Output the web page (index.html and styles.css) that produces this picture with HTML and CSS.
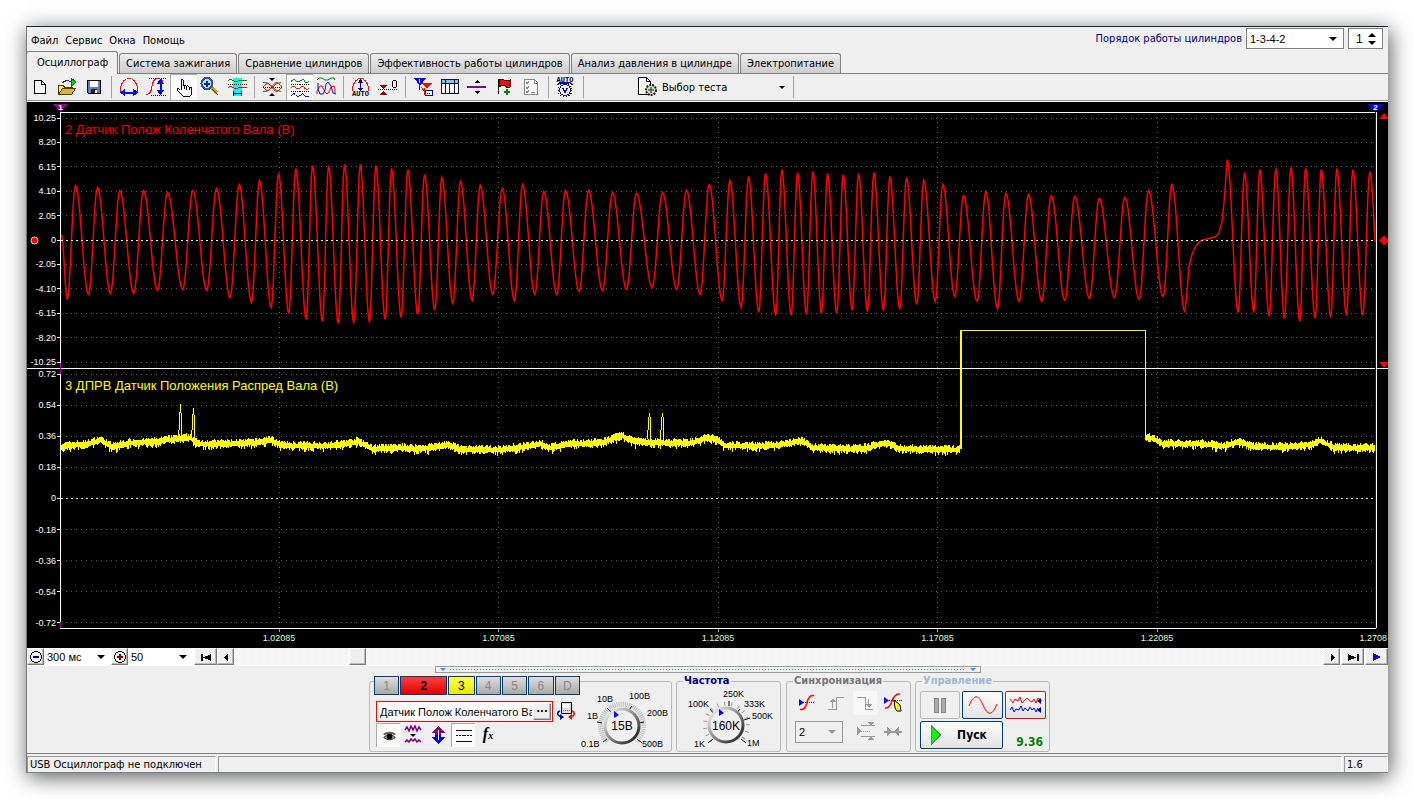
FILE: index.html
```html
<!DOCTYPE html>
<html lang="ru">
<head>
<meta charset="utf-8">
<title>USB Осциллограф</title>
<link rel="stylesheet" href="styles.css">
</head>
<body>
<div class="window">
  <header class="top">
    <nav class="menu">
      <button>Файл</button><button>Сервис</button><button>Окна</button><button>Помощь</button>
    </nav>
    <div class="order">
      <label for="order">Порядок работы цилиндров</label>
      <span class="drop order-drop"><select id="order"><option>1-3-4-2</option></select></span>
      <span class="spin"><input id="cyl" type="text" value="1" aria-label="Цилиндр"><span class="spin-arrows"><i class="up"></i><i class="down"></i></span></span>
    </div>
  </header>

  <div class="tabs" role="tablist">
    <button class="tab active" role="tab" aria-selected="true">Осциллограф</button>
    <button class="tab" role="tab">Система зажигания</button>
    <button class="tab" role="tab">Сравнение цилиндров</button>
    <button class="tab" role="tab">Эффективность работы цилиндров</button>
    <button class="tab" role="tab">Анализ давления в цилиндре</button>
    <button class="tab" role="tab">Электропитание</button>
  </div>

  <div class="toolbar">
    <button class="tool" aria-label="Новый"><svg viewBox="0 0 27 26"><path d="M7.500 6.500h7l4 4v9h-11z" fill="#fff" stroke="#000"/><path d="M14.500 6.500v4h4" fill="none" stroke="#000"/></svg></button>
    <button class="tool" aria-label="Открыть"><svg viewBox="0 0 27 26"><path d="M4.500 20.500v-9h5l1 2h8v3" fill="#ffe680" stroke="#4d3b00"/><path d="M4.500 20.500l4-6h13l-4 6z" fill="#d8b23c" stroke="#4d3b00"/><path d="M8 9q4-4 9-1" fill="none" stroke="#333"/><path d="M17 4l5 4-5 5z" fill="#00d020" stroke="#063"/></svg></button>
    <button class="tool" aria-label="Сохранить"><svg viewBox="0 0 27 26"><path d="M6.500 6.500h13v13h-12l-1-1z" fill="#6478c8" stroke="#000"/><path d="M9 7h8v6H9z" fill="#fff"/><path d="M10 15h6v4h-6z" fill="#222"/><path d="M14 16h2v3h-2z" fill="#fff"/></svg></button>
    <i class="sep"></i>
    <button class="tool" aria-label="Развертка"><svg viewBox="0 0 27 26"><path d="M4.500 18v-4q0-3 3-7q2-2.500 5.500-2.500t5.500 2.500q3 4 3 7v4" fill="none" stroke="red"/><path d="M6 18.500h14" stroke="#00f" stroke-width="2"/><path d="M4 18.500l5-4v8zM22 18.500l-5-4v8z" fill="#00f"/></svg></button>
    <button class="tool" aria-label="Амплитуда"><svg viewBox="0 0 27 26"><path d="M3 20.500q5 0 6-8t6-8q3 0 5 3" fill="none" stroke="red"/><path d="M6 4.500h17M8 21.500h15" stroke="#000" stroke-dasharray="1 1"/><path d="M17.500 7v12" stroke="#00f" stroke-width="2"/><path d="M17.500 5l-4 5h8zM17.500 21l-4-5h8z" fill="#00f"/></svg></button>
    <button class="tool pressed" aria-label="Рука"><svg viewBox="0 0 27 26"><path d="M10.500 15V6q0-1.500 1-1.500T13 6v5q2-2 3 .500q2-1.500 3 1q2-.5 2.500 1.500v5l-1.500 3h-8l-5-6q-1.500-2 0-2t3 2z" fill="#fff" stroke="#000"/><path d="M13.500 11v4M16.500 12v4M19.500 13v3" stroke="#000"/></svg></button>
    <button class="tool" aria-label="Лупа"><svg viewBox="0 0 27 26"><path d="M14 13l6 6" stroke="#d09a18" stroke-width="4"/><path d="M15 15l6 6" stroke="#503800"/><circle cx="10" cy="9.500" r="5.500" fill="#b4dcff" stroke="#38547e" stroke-width="2"/><path d="M7 9.500h6M10 6.500v6" stroke="#003080" stroke-width="2"/></svg></button>
    <button class="tool" aria-label="Участок"><svg viewBox="0 0 27 26"><path d="M9 4h9v18H9z" fill="#0ff"/><path d="M4 7q2-3 4-1t6 1t5-1t4 1" fill="none" stroke="green"/><path d="M4 10.500h19" stroke="#000" stroke-dasharray="1 1"/><path d="M4 14q2-3 4-1t6 1t5-1t4 1" fill="none" stroke="red"/><path d="M9.500 17v5M17.500 17v5M10 19.500h7" stroke="#00a" stroke-width="1.500"/></svg></button>
    <i class="sep"></i>
    <button class="tool" aria-label="Совместить"><svg class="smooth" viewBox="0 0 27 26"><path d="M4 8.500q5-1 9 4t9 5" fill="none" stroke="green"/><path d="M4 17.500q5 1 9-4t9-5" fill="none" stroke="green"/><path d="M4 13l3 3q2 2 5-2l4-5q2-2 5 2l2 2M4 13l3-3q2-2 5 2l4 5q2 2 5-2l2-2" fill="none" stroke="red"/><path d="M4 13.500h19" stroke="#000" stroke-dasharray="1 1"/><path d="M10 4h6l-3 3zM10 22h6l-3-3z"/></svg></button>
    <button class="tool pressed" aria-label="Разделить"><svg viewBox="0 0 27 26"><path d="M4 7q3-4 5-1t5 0t4 0t5 1" fill="none" stroke="green"/><path d="M4 9.500h19M4 17.500h19" stroke="#000" stroke-dasharray="1 1"/><path d="M4 14q3-4 5-1t5 0t4 0t5 1" fill="none" stroke="red"/><path d="M4 22q3-4 5-1t5 0t4 0t5 1" fill="none" stroke="#00f"/></svg></button>
    <button class="tool" aria-label="Наложить"><svg class="smooth" viewBox="0 0 27 26"><path d="M4 6l2-2h3l3 2h3l3-2h3l1 2" fill="none" stroke="green"/><path d="M4 20v-3l3-5h2l3 6 2 2 2-2 2-5 3-1 1 3v5" fill="none" stroke="red"/><path d="M5 9v6l2 5h3l2-4 1-6 2-2 3 4 2 7 3 1" fill="none" stroke="#00f"/></svg></button>
    <i class="sep"></i>
    <button class="tool" aria-label="Авто"><svg viewBox="0 0 27 26"><path d="M4.500 17v-3q0-3 3-7q2-2.500 5-2.500t5 2.500q3 4 3 7v3" fill="none" stroke="red"/><path d="M12.500 7v9" stroke="#009" stroke-width="1.500"/><path d="M12.500 5l-3 4h6zM12.500 17l-3-3h6z" fill="#009"/><text class="auto" x="12.500" y="22">AUTO</text></svg></button>
    <button class="tool" aria-label="Ноль"><svg viewBox="0 0 27 26"><path d="M3 15.500h20" stroke="#000" stroke-dasharray="1 1"/><path d="M4 11h8l-4 4zM4 21h8l-4-4z" fill="#900"/><rect x="17.500" y="6.500" width="4" height="7" rx="2" fill="none" stroke="#000"/></svg></button>
    <i class="sep"></i>
    <button class="tool" aria-label="Маркеры"><svg viewBox="0 0 27 26"><path d="M4 4h12l-6 8z" fill="#00f"/><path d="M9.500 10v6" stroke="#00f"/><path d="M9.500 5v4" stroke="#fff"/><path d="M12 9h10l-5 6z" fill="red"/><path d="M14.500 14v7M11 13l4 5" stroke="red"/><rect x="15.500" y="16.500" width="7" height="5" fill="#fff" stroke="#009"/><path d="M17 19.500h4" stroke="#009" stroke-dasharray="1 1"/></svg></button>
    <button class="tool" aria-label="Таблица"><svg viewBox="0 0 27 26"><path d="M4.500 5.500h17v14h-17z" fill="#fff" stroke="#113"/><path d="M5 6h16v3H5z" fill="#8abdf0"/><path d="M4 9.500h18M8.500 5v15M12.500 9v11M17.500 5v15" stroke="#113"/></svg></button>
    <button class="tool" aria-label="Уровень"><svg viewBox="0 0 27 26"><path d="M3 13h19" stroke="#800080" stroke-width="2"/><path d="M10 9h6l-3-3zM10 17h6l-3 3z"/></svg></button>
    <button class="tool" aria-label="Флаг"><svg viewBox="0 0 27 26"><path d="M7.500 5v15" stroke="#000"/><path d="M8 6q3-2 5 0t6 0v7q-3 1-5-1t-6 1z" fill="red" stroke="#400"/><path d="M13 17.500h6M16 14.500v6" stroke="green" stroke-width="2"/></svg></button>
    <button class="tool" aria-label="Список"><svg viewBox="0 0 27 26"><path d="M6.500 5.500h10l3 3v12h-13z" fill="#fafafa" stroke="#888"/><path d="M8 8l1 2 2-3M8 13l1 2 2-3M8 17l1 2 2-3M16.500 5v4h3M13 18.500h4" fill="none" stroke="#888"/></svg></button>
    <i class="sep"></i>
    <button class="tool" aria-label="Автонастройка"><svg viewBox="0 0 27 26"><text class="auto" x="12" y="8">AUTO</text><path d="M5 11q1-3 4-2h6q3-1 4 2" fill="none" stroke="#00f" stroke-width="1.500"/><circle cx="12" cy="16" r="7" fill="none" stroke="#000" stroke-dasharray="1 2"/><circle cx="12" cy="16" r="5.500" fill="#eee" stroke="#222"/><path d="M9.500 14l2.500 4 2.500-4" fill="none" stroke="#00f" stroke-width="1.500"/></svg></button>
    <i class="sep"></i>
    <button class="test"><svg viewBox="0 0 22 22"><path d="M1.500 1.500h8l4 4v13h-12z" fill="#fff" stroke="#000"/><path d="M9.500 1.500v4h4" fill="none" stroke="#000"/><circle cx="14" cy="14" r="5" fill="#cfe0c8" stroke="#222" stroke-width="2" stroke-dasharray="2 1"/><path d="M11 14h6M14 11v6" stroke="#222"/></svg><span>Выбор теста</span><i class="down"></i></button>
    <i class="sep"></i>
  </div>

  <main class="scope"><svg id="scope" role="img" aria-label="Осциллограмма"></svg></main>

  <div class="scrollrow">
    <button class="bev b16" aria-label="Уменьшить"><svg viewBox="0 0 14 14"><circle cx="7" cy="7" r="5.500" fill="none" stroke="#000"/><path d="M4 7h6" stroke="#008" stroke-width="2"/></svg></button>
    <span class="drop zoom-a"><select aria-label="Развертка"><option>300 мс</option></select></span>
    <button class="bev b16" aria-label="Увеличить"><svg viewBox="0 0 14 14"><circle cx="7" cy="7" r="5.500" fill="none" stroke="#000"/><path d="M4 7h6M7 4v6" stroke="#800" stroke-width="2"/></svg></button>
    <span class="drop zoom-b"><select aria-label="Масштаб"><option>50</option></select></span>
    <button class="bev b23" aria-label="В начало"><svg viewBox="0 0 14 14"><path d="M2 4h1.500v7H2zM12 4v7L4 7.500z"/></svg></button>
    <button class="bev b16" aria-label="Назад"><svg viewBox="0 0 14 14"><path d="M9 4v7L5 7.500z"/></svg></button>
    <div class="track"><button class="bev thumb" aria-label="Прокрутка"></button></div>
    <button class="bev b16" aria-label="Вперед"><svg viewBox="0 0 14 14"><path d="M6 4v7l4-3.500z"/></svg></button>
    <button class="bev b23" aria-label="В конец"><svg viewBox="0 0 14 14"><path d="M11 4h1.500v7H11zM2 4v7l8-3.500z"/></svg></button>
    <button class="bev b23" aria-label="Воспроизвести"><svg viewBox="0 0 14 14"><path d="M3 3v8l8-4z" fill="#00f"/></svg></button>
  </div>

  <div class="splitter"><i></i><b></b><i></i></div>

  <section class="panel">
    <div class="group g-chan">
      <div class="chan-left">
        <div class="chans">
          <button>1</button><button class="c2">2</button><button class="c3">3</button><button>4</button><button>5</button><button>6</button><button>D</button>
        </div>
        <div class="namerow">
          <div class="name"><input type="text" value="Датчик Полож Коленчатого Вала" aria-label="Имя канала"><button class="bev" aria-label="Выбрать">···</button></div>
          <svg class="swap" viewBox="0 0 20 20"><path d="M5.500 1.500h10v11h-10z" fill="#ddd" stroke="#000"/><path d="M7 3h7v4H7z" fill="#fff"/><path d="M7 9.500h7" stroke="#0a0" stroke-dasharray="1 1"/><path d="M4 10q-3 1-2 4l3 2" fill="none" stroke="#009" stroke-width="1.500"/><path d="M4 13l4 3-4 3z" fill="#009"/><path d="M16 10q3 1 2 4l-3 2" fill="none" stroke="red" stroke-width="1.500"/><path d="M16 13l-4 3 4 3z" fill="red"/></svg>
        </div>
        <div class="minis">
          <button class="mini pressed" aria-label="Видимость"><svg class="smooth" viewBox="0 0 24 24"><path d="M7 14q6-6 12 0q-6 5-12 0z" fill="#b9a89c" stroke="#222"/><path d="M7 11q6-4 12 0" fill="none" stroke="#555" stroke-width="2"/><circle cx="13" cy="13" r="3"/></svg></button>
          <button class="mini" aria-label="Фильтр"><svg class="smooth" viewBox="0 0 24 24"><path d="M4 7l2-3 2 4 2-5 2 4 2-4 2 5 2-4 2 3M4 19l2-2 2 2 2-3 2 2 2-2 2 3 2-2 2 2" fill="none" stroke="#800080" stroke-width="1.500"/><path d="M9 11h6l-3 3z"/></svg></button>
          <button class="mini" aria-label="Инверсия"><svg viewBox="0 0 24 24"><path d="M12 3l7 7h-4v2H9v-2H5z" fill="#800080"/><path d="M12 21l7-7h-4v-2H9v2H5z" fill="#00f"/><path d="M12 7v10" stroke="#eee"/></svg></button>
          <button class="mini pressed" aria-label="Линии"><svg viewBox="0 0 24 24"><path d="M4 6.500h17M4 18.500h17" stroke="#000"/><path d="M4 12.500h17" stroke="#000" stroke-dasharray="2 1"/></svg></button>
          <button class="mini fx" aria-label="Функция"><i>f</i><sub>x</sub></button>
        </div>
      </div>
      <svg class="knob" viewBox="0 0 88 68">
        <defs><linearGradient id="rim" x1="0" y1="0" x2="1" y2="1"><stop offset="0" stop-color="#fff"/><stop offset=".5" stop-color="#888"/><stop offset="1" stop-color="#111"/></linearGradient></defs>
        <path d="M27.500 57.500A21.500 21.500 0 1 1 56.500 57.500" fill="none" stroke="#bbb" stroke-width="5" stroke-dasharray="1 1"/>
        <path d="M23 58l4-3M17 38l5 1M27 24l4 4M52 22l-3 4M64 38l-5 1M57 55l5 4" stroke="#000"/>
        <circle cx="42" cy="42" r="17" fill="#efefef" stroke="url(#rim)" stroke-width="3"/>
        <path d="M34 27v7l5-3z" fill="#00f"/>
        <text class="kv" x="42" y="46">15В</text>
        <text x="1" y="63">0.1В</text><text x="7" y="35">1В</text><text x="17" y="18">10В</text><text x="49" y="15">100В</text><text x="67" y="32">200В</text><text x="62" y="63">500В</text>
      </svg>
    </div>

    <fieldset class="group g-freq"><legend>Частота</legend>
      <svg class="knob" viewBox="0 0 96 62">
        <path d="M30 52A21.500 21.500 0 1 1 59 52" fill="none" stroke="#999" stroke-width="4" stroke-dasharray="1 6"/>
        <path d="M26 54l5-4M28 20l4 5M47 12v5M58 20l-3 4M62 31l6-2M59 50l5 4" stroke="#000"/>
        <circle cx="44" cy="36" r="17" fill="#efefef" stroke="url(#rim)" stroke-width="3"/>
        <path d="M37 20v7l5-3z" fill="#00f"/>
        <text class="kv" x="44" y="41">160K</text>
        <text x="12" y="58">1K</text><text x="6" y="18">100K</text><text x="41" y="8">250K</text><text x="62" y="18">333K</text><text x="70" y="30">500K</text><text x="65" y="57">1M</text>
      </svg>
    </fieldset>

    <fieldset class="group g-sync"><legend>Синхронизация</legend>
      <div class="sync-grid">
        <button class="mini" aria-label="Уровень"><svg class="smooth" viewBox="0 0 24 24"><path d="M5 18.500q5 1 7-7t7-7" fill="none" stroke="red" stroke-width="1.500"/><path d="M8 11.500h12" stroke="#00f" stroke-dasharray="1 1"/><path d="M4 8v7l5-3.500z" fill="#00f"/></svg></button>
        <button class="mini" aria-label="Фронт"><svg viewBox="0 0 24 24"><path d="M4 18.500h8v-12h8" fill="none" stroke="#999"/><path d="M8.500 17v-7" stroke="#999"/><path d="M6 11h6l-3-4z" fill="#999"/></svg></button>
        <button class="mini soft" aria-label="Спад"><svg viewBox="0 0 24 24"><path d="M4 6.500h8v12h8" fill="none" stroke="#999"/><path d="M15.500 8v7" stroke="#999"/><path d="M13 13h6l-3 4z" fill="#999"/></svg></button>
        <button class="mini" aria-label="Курсор"><svg class="smooth" viewBox="0 0 24 24"><path d="M4 17q4 1 7-7t8-7" fill="none" stroke="red" stroke-width="1.500"/><path d="M6 9.500h15" stroke="#00f" stroke-dasharray="1 1"/><path d="M3 6v7l5-3.500z" fill="#00f"/><path d="M13 9l1 8 2 3h4l-1-6z" fill="#ff0" stroke="#000"/></svg></button>
        <span class="drop sync-drop"><select aria-label="Канал синхронизации"><option>2</option></select></span>
        <button class="mini" aria-label="Диапазон"><svg viewBox="0 0 24 24"><path d="M8 6.500h14M8 17.500h14" stroke="#999"/><path d="M4 12h14" stroke="#999" stroke-dasharray="1 1"/><path d="M4 8v8l4-4zM14 3h7l-3.500 3.500zM14 21h7l-3.500-3.500z" fill="#999"/></svg></button>
        <button class="mini" aria-label="Центр"><svg viewBox="0 0 24 24"><path d="M3 12.500h18" stroke="#999" stroke-width="2"/><path d="M6 8v9l5-4.500zM18 8v9l-5-4.500z" fill="#999"/></svg></button>
      </div>
    </fieldset>

    <fieldset class="group g-ctl"><legend>Управление</legend>
      <div class="ctl-grid">
        <button class="ctl off" aria-label="Пауза"><svg viewBox="0 0 38 26"><path d="M13.500 6.500h4v14h-4zM20.500 6.500h4v14h-4z" fill="#aaa" stroke="#888"/></svg></button>
        <button class="ctl" aria-label="Синус"><svg class="smooth" viewBox="0 0 38 26"><path d="M5 14q7-18 14-1t14-1" fill="none" stroke="red"/></svg></button>
        <button class="ctl rec" aria-label="Запись"><svg class="smooth" viewBox="0 0 38 26"><path d="M3 7l3 4 2-4 3 2 2-4 2 6 3-3 2-2 3 3 2 1 2-3 2 4 2-5 4 3" fill="none" stroke="red"/><path d="M3 18l2-3 2 5 2-3 3 1 2-4 2 5 2-3 3 3 2-4 2 3 2-2 2 4 2-4" fill="none" stroke="#00f"/><path d="M34 6v6l-4-3zM34 15v6l-4-3z" fill="#009"/></svg></button>
        <button class="ctl go"><svg viewBox="0 0 12 20"><path d="M1.500 1v18l9-9z" fill="#0f0" stroke="#5a8a5a"/></svg><span>Пуск</span></button>
        <output class="num">9.36</output>
      </div>
    </fieldset>
  </section>

  <footer class="status"><span class="s1">USB Осциллограф не подключен</span><span class="s2"></span><span class="s3">1.6</span></footer>
</div>
<script src="script.js"></script>
</body>
</html>
```

FILE: styles.css
```css
* { box-sizing: border-box; }
body {
  margin: 0;
  height: 100vh;
  padding: 26px;
  background: #fff;
  display: flex;
  font: 11px "DejaVu Sans Condensed", "DejaVu Sans", sans-serif;
  color: #000;
  overflow: hidden;
}
button, input, select { font: inherit; color: inherit; margin: 0; padding: 0; border: 0; background: none; border-radius: 0; outline: 0; }
select { appearance: none; width: 100%; height: 100%; }
.window {
  flex: 1;
  min-width: 0;
  display: flex;
  flex-direction: column;
  background: #efefef;
  border-top: 1px solid #1c2430;
  border-left: 1px solid #777;
  border-bottom: 1px solid #6f8298;
  box-shadow: 2px 4px 20px rgba(0, 0, 0, .65);
}
.top { display: flex; justify-content: space-between; height: 24px; }
.menu { display: flex; gap: 7px; padding: 3px 0 0 4px; }
.order { display: flex; align-items: flex-start; gap: 4px; padding: 1px 5px 0 0; }
.order label { color: #000080; line-height: 21px; }
.drop { position: relative; display: block; background: #fff; }
.drop select { padding-left: 3px; font: 11px "Liberation Sans", sans-serif; }
.drop::after { content: ""; position: absolute; right: 6px; top: 8px; border: 4px solid transparent; border-top-color: #000; border-bottom: 0; pointer-events: none; }
.order-drop { width: 98px; height: 21px; border: 1px solid #808080; }
.spin { display: flex; width: 35px; height: 21px; border: 1px solid #808080; background: #fff; }
.spin input { width: 19px; padding-left: 7px; font: 12px "Liberation Sans", sans-serif; }
.spin-arrows { display: flex; flex-direction: column; justify-content: center; gap: 4px; }
.up, .down { display: block; border: 4px solid transparent; }
.up { border-bottom-color: #000; border-top: 0; }
.down { border-top-color: #000; border-bottom: 0; }

.tabs { display: flex; align-items: flex-end; gap: 1px; height: 23px; border-bottom: 1px solid #808080; }
.tab { height: 20px; padding: 0 6px; border: 1px solid #808080; border-bottom: 0; border-radius: 3px 3px 0 0; background: linear-gradient(#eee, #ccc); white-space: nowrap; }
.tab.active { height: 23px; padding: 0 9px 2px 10px; background: #efefef; margin: 0 0 -1px -1px; }

.toolbar { display: flex; height: 28px; padding-bottom: 1px; border-bottom: 1px solid #fff; box-shadow: inset 0 -1px #999; }
.tool { width: 27px; height: 26px; }
.tool svg, .mini svg, .ctl svg, .bev svg { display: block; margin: auto; shape-rendering: crispEdges; }
.tool svg.smooth, .mini svg.smooth, .ctl svg.smooth { shape-rendering: auto; }
.tool svg { width: 27px; height: 26px; }
.pressed { background: #fafafa; border-top: 1px solid #aaa; border-left: 1px solid #aaa; }
.tool.pressed svg { width: 26px; height: 25px; }
.sep { width: 8px; height: 22px; margin-top: 2px; background: linear-gradient(#a0a0a0, #a0a0a0) 3px 0 / 1px 100% no-repeat; }
.auto { font: bold 7px "Liberation Mono", monospace; text-anchor: middle; }
.test { display: flex; align-items: center; width: 202px; padding: 0 5px 0 49px; text-align: left; }
.test svg { width: 22px; height: 22px; margin-right: 3px; }
.test span { flex: 1; }
.test .down { border-width: 3px 3px 0; }

.scope { flex: 1; min-height: 0; background: #000; }
.scope svg { display: block; width: 100%; height: 100%; }
.scope line { shape-rendering: crispEdges; }
.scope text { font: 9px "Liberation Sans", sans-serif; fill: #fff; }
.scope .title { font-size: 13px; }
.scope .mark { font-size: 8px; font-weight: bold; }
.trace { fill: none; shape-rendering: crispEdges; }
.wave { fill: none; stroke: red; stroke-width: 1.5; }

.scrollrow { display: flex; height: 18px; background: #fff; padding-bottom: 1px; }
.bev { display: block; background: #efefef; border: 1px solid; border-color: #fff #777 #777 #fff; box-shadow: inset -1px -1px #bbb; }
.bev svg { width: 14px; height: 14px; }
.b16 { width: 17px; flex: none; }
.b23 { width: 23px; flex: none; margin-left: 1px; }
.zoom-a { width: 67px; }
.zoom-b { width: 65px; }
.zoom-a::after, .zoom-b::after { top: 7px; }
.track { flex: 1; background: repeating-conic-gradient(#fff 0 25%, #eee 0 50%) 0 0 / 2px 2px; padding-left: 115px; }
.thumb { width: 17px; height: 17px; }

.splitter { display: flex; align-items: center; justify-content: space-between; width: 546px; max-width: 100%; height: 7px; margin: 0 auto; border: 1px solid #999; padding: 0 4px; }
.splitter i { border: 3px solid transparent; border-top-color: #3390f0; border-bottom: 0; }
.splitter b { flex: 1; margin: 0 4px; height: 1px; background: repeating-linear-gradient(90deg, #3390f0 0 1px, transparent 1px 3px); }

.panel { display: flex; justify-content: center; align-items: flex-end; gap: 4px; height: 81px; padding: 0 0 1px 4px; border-bottom: 1px solid #808080; }
.group { position: relative; min-width: 0; margin: 0; padding: 0; height: 71px; border: 1px solid #bbb; border-radius: 3px; }
fieldset.group { height: 77px; }
legend { margin-left: 6px; padding: 0 1px; font-weight: bold; line-height: 12px; }
.g-chan { display: flex; width: 303px; }
.chan-left { width: 210px; padding-left: 4px; margin-top: -6px; }
.chans { display: flex; gap: 1px; background: #efefef; }
.chans button { width: 26px; height: 19px; border: 1px solid #003c74; background: linear-gradient(#ddd, #aaa); color: #888; font: 12px "Liberation Sans", sans-serif; }
.chans .c2 { width: 48px; background: linear-gradient(#ff4040, #e00000); color: #000; font-weight: bold; }
.chans .c3 { width: 27px; background: linear-gradient(#ffff50, #e8e800); color: #000; }
.namerow { display: flex; gap: 3px; margin: 6px 0 0 2px; }
.name { display: flex; width: 177px; flex: none; height: 21px; border: 1px solid red; background: #fff; }
.name input { flex: 1; min-width: 0; padding-left: 3px; font: 11px "Liberation Sans", sans-serif; }
.name button { width: 18px; margin: 1px; font-weight: bold; line-height: 10px; }
.swap { width: 20px; height: 20px; flex: none; }
.minis { display: flex; gap: 1px; margin: 1px 0 0 2px; }
.mini { width: 24px; height: 24px; display: block; }
.mini svg { width: 24px; height: 24px; }
.mini.pressed svg { width: 23px; height: 23px; }
.soft { background: #f8f8f8; }
.fx { font: italic bold 16px "Liberation Serif", serif; line-height: 20px; }
.fx sub { font-size: 10px; vertical-align: baseline; }
.knob { display: block; overflow: visible; }
.knob text { font: 9px "Liberation Sans", sans-serif; }
.knob .kv { font-size: 12px; text-anchor: middle; }
.g-chan .knob { width: 88px; height: 68px; flex: none; margin-top: 2px; }
.g-freq { width: 105px; margin-right: 1px; }
.g-freq legend { color: #000080; }
.g-freq .knob { width: 96px; height: 62px; margin: 2px 0 0 5px; }
.g-sync { width: 125px; }
.g-sync legend { color: #777; }
.sync-grid { display: grid; grid-template-columns: 29px 29px 28px 28px; padding: 4px 0 0 8px; row-gap: 4px; }
.sync-drop { grid-column: 1 / 3; width: 48px; height: 22px; border: 1px solid #999; background: #efefef; margin-top: 2px; }
.sync-drop::after { border-top-color: #999; }
.sync-grid .mini:nth-child(6) { grid-column: 3; }
.g-ctl { width: 135px; }
.g-ctl legend { color: #9db8d8; }
.ctl-grid { display: grid; grid-template-columns: 40px 41px 41px; gap: 2px; padding: 4px 0 0 4px; }
.ctl { height: 28px; border: 1px solid #003c74; border-radius: 2px; background: linear-gradient(#fff, #e2e2e2); }
.ctl svg { width: 38px; height: 26px; }
.ctl.off { border-color: #bbb; background: #efefef; }
.ctl.rec { border: 1px solid red; }
.go { grid-column: 1 / 3; display: flex; align-items: center; font-weight: bold; }
.ctl.go svg { width: 12px; height: 20px; margin: 0 0 0 9px; }
.go span { flex: 1; text-align: center; font-size: 12px; }
.num { align-self: end; text-align: right; padding: 0 3px 0 0; color: #008000; font-weight: bold; font-size: 12px; }

.status { display: flex; gap: 2px; height: 18px; padding-top: 2px; }
.status span { height: 16px; border-top: 1px solid #999; border-left: 1px solid #999; border-right: 1px solid #fff; padding-left: 2px; line-height: 15px; }
.s1 { width: 189px; }
.s2 { flex: 1; }
.s3 { width: 44px; }
```

FILE: script.js
```js
// Traces are stored in the coordinates of a 1361 x 546 plot whose origin is (27, 102).
const crank = [61,234, 66.7,299, 75,185, 88,294, 97,187, 110,293, 119.3,190, 133.3,293, 143,190, 157,290, 167,192, 182.3,289,
192.3,190, 206.3,290, 216,188, 229.7,297, 238.7,184, 251,302, 259,180, 270.7,307, 278,173, 288.3,313, 295.3,168, 305.7,319,
312,165, 322,321, 328,165, 337.7,323, 344,164, 353.3,323, 359.7,164, 369,322, 375.3,165, 384.7,319, 391,168, 400.7,317,
407.3,169, 417.3,314, 424,174, 434.3,310, 441.3,177, 452.3,303, 460,181, 471.7,300, 479.7,185, 492.3,294, 501.7,188, 514,300,
522,184, 534.3,294, 543.3,191, 556.3,294, 565,190, 578.7,291, 588,190, 602,290, 612,192, 626,289, 636,193, 651.7,287,
662,192, 676.3,289, 686,190, 699.7,294, 708.7,184, 721.7,300, 729.3,180, 740.7,307, 748,176, 758.3,312, 765,173, 775.3,315,
781.3,169, 790.7,315, 797,172, 806,314, 812.3,171, 821,313, 827,173, 836.3,313, 842.7,174, 851.7,310, 858,173, 867,311,
873.3,172, 883,310, 889.3,176, 899.3,309, 906,177, 916.3,304, 923.3,180, 934.7,301, 942.3,184, 954.3,296, 963,195, 976.7,301,
985.3,191, 997,308, 1005.3,193, 1018.7,301, 1028,194, 1041.3,301, 1050.7,195, 1064.3,300, 1074.3,196, 1089,298, 1098.7,198,
1114,297, 1124.3,197, 1138.7,299, 1148,190, 1162.7,296, 1171.3,184, 1184.3,311];
const gap = [1186,298, 1188.3,267, 1191.7,253, 1195.7,245, 1200.7,240, 1208,238, 1215,236, 1218.3,233, 1221.7,220, 1223.7,200];
const tail = [1226.7,159, 1237.7,312, 1244,172, 1253.3,312, 1259.3,169, 1268.7,316, 1275.3,168, 1284,318, 1290.3,167, 1299.3,321,
1305,168, 1314.7,318, 1320.7,169, 1330.3,317, 1336.3,168, 1346,315, 1352.3,169, 1362.3,315, 1369.3,171, 1379.5,311];
const cam = [61,446, 75,444, 85,444, 100,439, 112,446, 130,442, 155,441, 176,438, 190,437, 197,443, 230,443, 255,442, 270,439,
283,445, 330,445, 345,443, 358,441, 372,448, 400,447, 420,448, 435,446, 446,444, 462,449, 500,449, 530,445, 540,443, 549,447,
570,443, 600,442, 612,438, 622,435, 634,441, 660,442, 690,442, 708,437, 718,440, 724,445, 770,445, 785,443, 798,440, 806,442,
812,447, 860,448, 870,446, 885,442, 892,444, 898,448, 960,449];
const cam2 = [1146,436, 1152,437, 1162,443, 1200,443, 1225,445, 1238,441, 1255,446, 1290,446, 1310,444, 1320,440, 1335,447, 1375,447];

function easedPoints(a) {
  const out = [];
  for (let i = 0; i + 3 < a.length; i += 2) {
    const [x0, y0, x1, y1] = a.slice(i, i + 4);
    const n = Math.round(x1 - x0);
    for (let k = 0; k < n; k++) {
      const t = k / n;
      const x = x0 + (x1 - x0) * t;
      if (x > 1375) break;
      out.push([x, y0 + (y1 - y0) * (1 - Math.cos(Math.PI * t)) / 2]);
    }
  }
  return out;
}
function pairs(a) {
  const out = [];
  for (let i = 0; i < a.length; i += 2) out.push([a[i], a[i + 1]]);
  return out;
}

function draw() {
  const svg = document.getElementById('scope');
  const W = svg.clientWidth, H = svg.clientHeight;
  const X = x => (x - 27) * W / 1361;
  const Y = y => (y - 102) * H / 546;
  const px = v => Math.floor(v + 0.01) + 0.5;
  const path = pts => 'M' + pts.map(p => px(X(p[0])) + ' ' + px(Y(p[1]))).join('L');
  const smooth = pts => 'M' + pts.map(p => (X(p[0]) + 0.5).toFixed(1) + ' ' + (Y(p[1]) + 0.5).toFixed(1)).join('L');
  let s = '';
  const line = (x1, y1, x2, y2, c, dash, w) => {
    const flat = y1 === y2;
    const ax = flat ? Math.floor(X(x1)) : px(X(x1)), bx = flat ? Math.floor(X(x2)) : px(X(x2));
    const ay = flat ? px(Y(y1)) : Math.floor(Y(y1)), by = flat ? px(Y(y2)) : Math.floor(Y(y2));
    s += `<line x1="${ax}" y1="${ay}" x2="${bx}" y2="${by}" stroke="${c}" stroke-width="${w || 1}"${dash ? ` stroke-dasharray="${dash}"` : ''}/>`;
  };
  const text = (x, y, t, anchor, cls, fill) => {
    s += `<text x="${X(x)}" y="${Y(y)}" text-anchor="${anchor}" class="${cls || ''}" style="fill:${fill || '#fff'}">${t}</text>`;
  };
  const rows = (y0, step, top, inc, digits) => {
    for (let i = 0; i <= top * 2; i++) {
      const y = y0 + step * i, v = (top - i) * inc;
      line(66, y, 1374, y, '#606060', '1 4');
      line(57, y, 61, y, '#fff');
      text(56, y + 3, i === top ? '0' : v.toFixed(digits), 'end');
    }
  };
  const zero = y => line(61, y, 1376, y, '#fff', '2 3');
  rows(118, 24.4, 5, 2.05, 2);
  rows(374, 31.1, 4, 0.18, 2);
  for (let i = 0; i < 5; i++) {
    const x = 279 + 219.5 * i;
    line(x, 117, x, 626, '#606060', '1 4');
    line(x, 628, x, 632, '#999');
    text(x, 641, (1.02085 + i * 0.05).toFixed(5), 'middle', '', '#d8ffd8');
  }
  text(1387, 641, '1.2708', 'end', '', '#d8ffd8');
  line(60, 112, 1376, 112, '#fff');
  line(60, 628, 1376, 628, '#fff');
  line(27, 368, 1388, 368, '#fff');
  line(60, 112, 60, 628, '#fff');
  line(60, 107, 60, 112, '#a000a0');
  line(60, 363, 60, 374, '#a000a0');
  line(60, 622, 60, 628, '#a000a0');
  line(1375, 107, 1375, 628, '#00f');
  line(1376, 112, 1376, 628, '#fff');

  const red = easedPoints(crank).concat([[1184.3, 311]], pairs(gap), easedPoints(tail));
  s += `<path class="wave" d="${smooth(red)}"/>`;
  zero(240);
  zero(498);

  let seed = 7;
  const rnd = () => (seed = (seed * 16807) % 2147483647) / 2147483647;
  const noise = a => {
    let d = '';
    for (let i = 0; i + 3 < a.length; i += 2) {
      for (let x = a[i]; x < a[i + 2]; x++) {
        const y = a[i + 1] + (a[i + 3] - a[i + 1]) * (x - a[i]) / (a[i + 2] - a[i]);
        const up = 1 + rnd() * 3, dn = 2 + rnd() * rnd() * 5;
        d += `M${px(X(x))} ${Y(y - up).toFixed(1)}V${Y(y + dn + 1).toFixed(1)}`;
      }
    }
    return d;
  };
  s += `<path class="trace" stroke="#ff0" d="${noise(cam)}${noise(cam2)}"/>`;
  [[180, 404], [193, 408], [649, 413], [662, 413]].forEach(([x, y]) => {
    s += `<path class="trace" stroke="#ff0" d="${path([[x - 2, 439], [x - 1, 420], [x, y], [x + 1, 420], [x + 1, 440]])}"/>`;
  });
  line(960, 330, 960, 449, '#ff0', '', 2);
  line(960, 330, 1146, 330, '#ff0');
  line(1145, 330, 1145, 440, '#ff0');

  text(65, 134, '2 Датчик Полож Коленчатого Вала (В)', 'start', 'title', '#f00000');
  text(65, 390, '3 ДПРВ Датчик Положения Распред Вала (В)', 'start', 'title', '#ff0');

  const shape = (x, y, d, c) => { s += `<path transform="translate(${X(x)} ${Y(y)})" d="${d}" fill="${c}"/>`; };
  shape(60.5, 104, 'M-8 0H8L0 8z', '#900090');
  shape(1375.5, 104, 'M-8 0H8L0 8z', '#00f');
  text(60.5, 110, '1', 'middle', 'mark');
  text(1375.5, 110, '2', 'middle', 'mark');
  shape(1384, 113, 'M0 0L5 6H-5z', 'red');
  shape(1384, 240.5, 'M0-5L5 0L0 5L-5 0z', 'red');
  shape(1384, 362, 'M-5 0H5L0 6z', 'red');
  s += `<circle cx="${X(34.5)}" cy="${Y(240.5)}" r="3.5" fill="red" stroke="#fcc" stroke-width="1"/>`;
  svg.innerHTML = s;
}
draw();
window.addEventListener('resize', draw);
```
